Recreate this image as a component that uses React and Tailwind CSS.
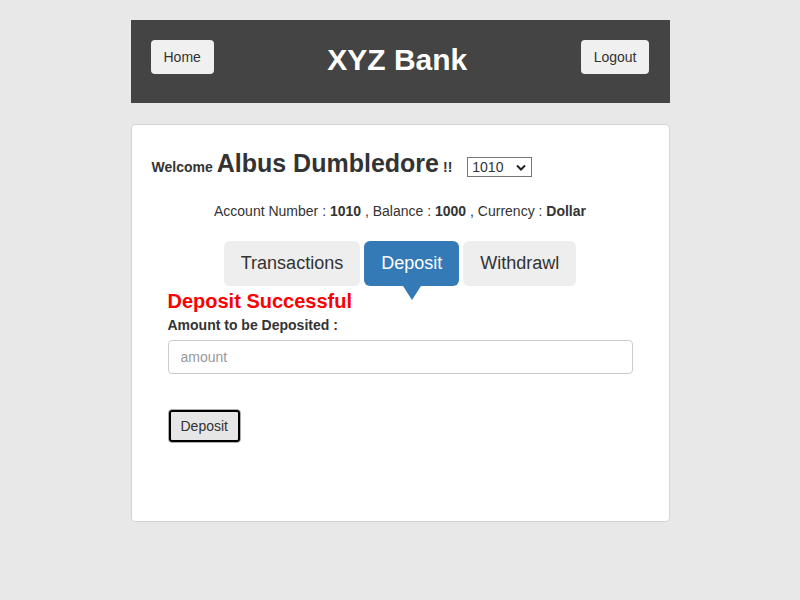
import React, { useState } from 'react';

const App = () => {
  const [account, setAccount] = useState('1010');
  const [amount, setAmount] = useState('');
  const [tab, setTab] = useState('deposit');

  const tabs = [
    { id: 'transactions', label: 'Transactions' },
    { id: 'deposit', label: 'Deposit' },
    { id: 'withdrawl', label: 'Withdrawl' },
  ];

  return (
    <div className="min-h-screen bg-[#e8e8e8] pt-5 font-['Liberation_Sans',Arial,sans-serif] text-[#333]">
      <div className="mx-auto w-[539px]">
        <div className="flex h-[83px] items-start justify-between bg-[#444444] px-5 pt-5">
          <button className="h-[34px] rounded bg-[#f0f0f0] px-[13px] text-sm text-[#333]">Home</button>
          <h1 className="mt-[3px] text-[30px] font-bold leading-[34px] text-white">XYZ Bank</h1>
          <button className="h-[34px] rounded bg-[#f0f0f0] px-[13px] text-sm text-[#333]">Logout</button>
        </div>

        <div className="mt-[21px] h-[398px] rounded border border-[#d4d4d4] bg-white">
          <div className="flex items-baseline pl-5 pt-[20px]">
            <span className="text-sm font-bold">Welcome</span>
            <span className="ml-1 text-[25px] font-bold">Albus Dumbledore</span>
            <span className="ml-1 text-sm font-bold">!!</span>
            <div className="relative ml-[15px] flex">
              <select
                value={account}
                onChange={(e) => setAccount(e.target.value)}
                className="h-[20px] w-[65px] appearance-none border border-[#767676] bg-white pl-[4px] text-sm leading-[18px] text-[#333]"
              >
                <option>1010</option>
                <option>1011</option>
              </select>
              <svg className="pointer-events-none absolute right-[6px] top-[7px]" width="10" height="7" viewBox="0 0 10 7">
                <path d="M1 1.5 L5 5.5 L9 1.5" fill="none" stroke="#222" strokeWidth="2" />
              </svg>
            </div>
          </div>

          <p className="mt-[18px] text-center text-sm">
            Account Number : <b>1010</b> , Balance : <b>1000</b> , Currency : <b>Dollar</b>
          </p>

          <div className="mt-[20px] flex justify-center gap-1">
            {tabs.map((t) => (
              <button
                key={t.id}
                onClick={() => setTab(t.id)}
                className={
                  t.id === tab
                    ? 'relative h-[45px] rounded-md bg-[#337ab7] px-[17px] text-lg text-white'
                    : 'h-[45px] rounded-md bg-[#eeeeee] px-[17px] text-lg text-[#333]'
                }
              >
                {t.label}
                {t.id === tab && (
                  <span className="absolute left-1/2 top-full -translate-x-1/2 border-x-[9px] border-t-[14px] border-x-transparent border-t-[#337ab7]" />
                )}
              </button>
            ))}
          </div>

          <div className="px-9">
            <h3 className="mt-[2px] text-[20px] font-bold leading-[26px] text-[#ff0000]">Deposit Successful</h3>
            <label className="mt-[1px] block text-sm font-bold">Amount to be Deposited :</label>
            <input
              value={amount}
              onChange={(e) => setAmount(e.target.value)}
              placeholder="amount"
              className="mt-[5px] h-[34px] w-full rounded border border-[#cccccc] px-3 text-sm placeholder:text-[#999]"
            />
            <button className="mt-[35px] h-[34px] rounded border border-[#adadad] bg-[#e6e6e6] px-3 text-sm text-[#333] outline-2 outline-offset-[-3px] outline-black">
              Deposit
            </button>
          </div>
        </div>
      </div>
    </div>
  );
};

export default App;
